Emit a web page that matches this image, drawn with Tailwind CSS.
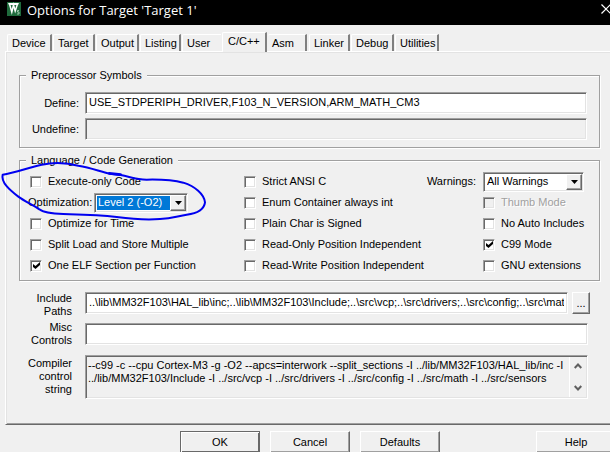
<!DOCTYPE html>
<html lang="en">
<head>
<meta charset="utf-8">
<title>Options for Target 'Target 1'</title>
<script src="https://cdn.jsdelivr.net/npm/@tailwindcss/browser@4"></script>
</head>
<body class="h-screen overflow-hidden bg-[#f0f0f0] font-['Liberation_Sans',Arial,sans-serif] text-[11px] leading-[13px] text-black">
<div class="relative flex h-full flex-col">

  <header class="flex h-[25px] shrink-0 items-center bg-black pl-[7px] text-white">
    <svg class="-mt-[7px] h-[14px] w-[14px]" viewBox="0 0 14 14" aria-hidden="true">
      <rect width="14" height="14" fill="#1f6a3c"/>
      <path d="M1 1h11L11 3H2z" fill="#fff"/>
      <path d="M2.500 2L4.800 10L6.500 3L8.200 9L10.500 2" fill="none" stroke="#fff" stroke-width="1.500"/>
      <path d="M12 8.500h-1.500v1.500h1.500v2h-2" fill="none" stroke="#b9dcc5" stroke-width=".8"/>
    </svg>
    <h1 class="-mt-[5px] ml-[6px] font-['Open_Sans','Noto_Sans',sans-serif] text-[13px] leading-[18px] whitespace-nowrap">Options for Target 'Target 1'</h1>
    <button aria-label="Close" class="-mt-[7px] -mr-[4px] ml-auto h-[18px] w-[16px]">
      <svg class="mx-auto h-[10px] w-[10px]" viewBox="0 0 10 10"><path d="M.5.5l9 9M9.500.5l-9 9" stroke="#fff" stroke-width="1.200"/></svg>
    </button>
  </header>

  <nav role="tablist" class="flex h-[26px] shrink-0 items-end gap-px pl-[7px]">
    <button role="tab" class="h-[17px] w-[45px] rounded-tl-[2px] border-t border-r-2 border-l border-t-white border-r-[#808080] border-l-white pt-px pl-1 text-left">Device</button>
    <button role="tab" class="h-[17px] w-[42px] rounded-tl-[2px] border-t border-r-2 border-l border-t-white border-r-[#808080] border-l-white pt-px pl-1 text-left">Target</button>
    <button role="tab" class="h-[17px] w-[43px] rounded-tl-[2px] border-t border-r-2 border-l border-t-white border-r-[#808080] border-l-white pt-px pl-1 text-left">Output</button>
    <button role="tab" class="h-[17px] w-[41px] rounded-tl-[2px] border-t border-r-2 border-l border-t-white border-r-[#808080] border-l-white pt-px pl-1 text-left">Listing</button>
    <button role="tab" class="h-[17px] w-[39px] rounded-tl-[2px] border-t border-l border-white pt-px pl-1 text-left">User</button>
    <button role="tab" aria-selected="true" class="z-10 -mb-px h-[20px] w-[45px] rounded-tl-[2px] border-t border-r-2 border-l border-t-white border-r-[#808080] border-l-white bg-[#f0f0f0] pb-[3px] pl-[5px] text-left">C/C++</button>
    <button role="tab" class="h-[17px] w-[39px] rounded-tl-[2px] border-t border-r-2 border-t-white border-r-[#808080] pt-px pl-1 text-left">Asm</button>
    <button role="tab" class="ml-px h-[17px] w-[41px] rounded-tl-[2px] border-t border-r-2 border-l border-t-white border-r-[#808080] border-l-white pt-px pl-1 text-left">Linker</button>
    <button role="tab" class="h-[17px] w-[43px] rounded-tl-[2px] border-t border-r-2 border-l border-t-white border-r-[#808080] border-l-white pt-px pl-1 text-left">Debug</button>
    <button role="tab" class="h-[17px] w-[44px] rounded-tl-[2px] border-t border-r-2 border-l border-t-white border-r-[#808080] border-l-white pt-px pl-1 text-left">Utilities</button>
  </nav>

  <main class="ml-[5px] shrink-0 border-t border-b border-l border-t-white border-b-[#696969] border-l-white pt-[15px] pr-[10px] pb-[25px] pl-[13px] shadow-[inset_1px_1px_0_#e3e3e3,inset_0_-1px_0_#a0a0a0]">

    <fieldset class="border border-[#a0a0a0] pt-[9px] pr-[12px] pb-[7px] shadow-[1px_1px_0_#fff,inset_1px_1px_0_#fff]">
      <legend class="relative ml-[6px] h-4 bg-[#f0f0f0] px-[5px] leading-4">Preprocessor Symbols</legend>
      <div class="grid grid-cols-[59px_1fr] items-center gap-x-[6px] gap-y-1">
        <label for="define" class="text-right">Define:</label>
        <input id="define" value="USE_STDPERIPH_DRIVER,F103_N_VERSION,ARM_MATH_CM3" class="h-[22px] w-full border border-t-[#a0a0a0] border-r-white border-b-white border-l-[#a0a0a0] bg-white px-[3px] pb-[2px] shadow-[inset_1px_1px_0_#696969,inset_-1px_-1px_0_#e3e3e3] outline-none">
        <label for="undefine" class="text-right">Undefine:</label>
        <input id="undefine" readonly class="h-[22px] w-full border border-t-[#a0a0a0] border-r-white border-b-white border-l-[#a0a0a0] bg-[#f0f0f0] px-[3px] shadow-[inset_1px_1px_0_#696969,inset_-1px_-1px_0_#e3e3e3] outline-none">
      </div>
    </fieldset>

    <fieldset class="mt-1 border border-[#a0a0a0] pt-[3px] pb-1 pl-[10px] shadow-[1px_1px_0_#fff,inset_1px_1px_0_#fff]">
      <legend class="relative ml-[-4px] h-4 bg-[#f0f0f0] px-[5px] leading-4">Language / Code Generation</legend>
      <div class="grid grid-cols-[214fr_239fr_116fr]">
        <div class="grid auto-rows-[21px] items-center">
          <label class="flex items-center gap-[6px]"><span class="grid"><input type="checkbox" class="col-start-1 row-start-1 h-3 w-3 appearance-none border border-t-[#a0a0a0] border-r-white border-b-white border-l-[#a0a0a0] bg-white shadow-[inset_1px_1px_0_#696969,inset_-1px_-1px_0_#e3e3e3]"></span>Execute-only Code</label>
          <div class="-ml-[2px] flex items-center gap-[6px]">
            <label for="opt" class="w-[60px]">Optimization:</label>
            <span class="grid w-[94px] items-center">
              <select id="opt" class="col-start-1 row-start-1 h-[20px] w-full appearance-none border border-t-[#a0a0a0] border-r-white border-b-white border-l-[#a0a0a0] bg-[#0078d7] pl-[3px] text-white shadow-[inset_1px_1px_0_#696969,inset_-1px_-1px_0_#e3e3e3,inset_0_0_0_2px_#fff] outline-none"><option>Level 2 (-O2)</option></select>
              <span class="pointer-events-none col-start-1 row-start-1 mr-[2px] grid h-4 w-4 place-items-center justify-self-end border border-t-white border-r-[#696969] border-b-[#696969] border-l-white bg-[#f0f0f0] shadow-[inset_-1px_-1px_0_#a0a0a0]"><svg class="h-1 w-[7px]" viewBox="0 0 7 4"><path d="M0 0h7L3.500 4z"/></svg></span>
            </span>
          </div>
          <label class="flex items-center gap-[6px]"><span class="grid"><input type="checkbox" class="col-start-1 row-start-1 h-3 w-3 appearance-none border border-t-[#a0a0a0] border-r-white border-b-white border-l-[#a0a0a0] bg-white shadow-[inset_1px_1px_0_#696969,inset_-1px_-1px_0_#e3e3e3]"></span>Optimize for Time</label>
          <label class="flex items-center gap-[6px]"><span class="grid"><input type="checkbox" class="col-start-1 row-start-1 h-3 w-3 appearance-none border border-t-[#a0a0a0] border-r-white border-b-white border-l-[#a0a0a0] bg-white shadow-[inset_1px_1px_0_#696969,inset_-1px_-1px_0_#e3e3e3]"></span>Split Load and Store Multiple</label>
          <label class="flex items-center gap-[6px]"><span class="grid place-items-center"><input type="checkbox" checked class="peer col-start-1 row-start-1 h-3 w-3 appearance-none border border-t-[#a0a0a0] border-r-white border-b-white border-l-[#a0a0a0] bg-white shadow-[inset_1px_1px_0_#696969,inset_-1px_-1px_0_#e3e3e3]"><svg class="pointer-events-none invisible col-start-1 row-start-1 h-[7px] w-[7px] peer-checked:visible" viewBox="0 0 7 7"><path d="M0 2v3l2.500 2L7 3V0L2.500 4z"/></svg></span>One ELF Section per Function</label>
        </div>

        <div class="grid auto-rows-[21px] items-center">
          <div class="flex items-center justify-between pr-[7px]">
            <label class="flex items-center gap-[6px]"><span class="grid"><input type="checkbox" class="col-start-1 row-start-1 h-3 w-3 appearance-none border border-t-[#a0a0a0] border-r-white border-b-white border-l-[#a0a0a0] bg-white shadow-[inset_1px_1px_0_#696969,inset_-1px_-1px_0_#e3e3e3]"></span>Strict ANSI C</label>
            <label for="warn">Warnings:</label>
          </div>
          <label class="flex items-center gap-[6px]"><span class="grid"><input type="checkbox" class="col-start-1 row-start-1 h-3 w-3 appearance-none border border-t-[#a0a0a0] border-r-white border-b-white border-l-[#a0a0a0] bg-white shadow-[inset_1px_1px_0_#696969,inset_-1px_-1px_0_#e3e3e3]"></span>Enum Container always int</label>
          <label class="flex items-center gap-[6px]"><span class="grid"><input type="checkbox" class="col-start-1 row-start-1 h-3 w-3 appearance-none border border-t-[#a0a0a0] border-r-white border-b-white border-l-[#a0a0a0] bg-white shadow-[inset_1px_1px_0_#696969,inset_-1px_-1px_0_#e3e3e3]"></span>Plain Char is Signed</label>
          <label class="flex items-center gap-[6px]"><span class="grid"><input type="checkbox" class="col-start-1 row-start-1 h-3 w-3 appearance-none border border-t-[#a0a0a0] border-r-white border-b-white border-l-[#a0a0a0] bg-white shadow-[inset_1px_1px_0_#696969,inset_-1px_-1px_0_#e3e3e3]"></span>Read-Only Position Independent</label>
          <label class="flex items-center gap-[6px]"><span class="grid"><input type="checkbox" class="col-start-1 row-start-1 h-3 w-3 appearance-none border border-t-[#a0a0a0] border-r-white border-b-white border-l-[#a0a0a0] bg-white shadow-[inset_1px_1px_0_#696969,inset_-1px_-1px_0_#e3e3e3]"></span>Read-Write Position Independent</label>
        </div>

        <div class="grid auto-rows-[21px] items-center">
          <span class="grid w-[101px] items-center">
            <select id="warn" class="col-start-1 row-start-1 h-[20px] w-full appearance-none border border-t-[#a0a0a0] border-r-white border-b-white border-l-[#a0a0a0] bg-white pl-[3px] shadow-[inset_1px_1px_0_#696969,inset_-1px_-1px_0_#e3e3e3] outline-none"><option>All Warnings</option></select>
            <span class="pointer-events-none col-start-1 row-start-1 mr-[2px] grid h-4 w-4 place-items-center justify-self-end border border-t-white border-r-[#696969] border-b-[#696969] border-l-white bg-[#f0f0f0] shadow-[inset_-1px_-1px_0_#a0a0a0]"><svg class="h-1 w-[7px]" viewBox="0 0 7 4"><path d="M0 0h7L3.500 4z"/></svg></span>
          </span>
          <label class="flex items-center gap-[6px] text-[#a0a0a0] text-shadow-[1px_1px_0_#fff]"><span class="grid"><input type="checkbox" disabled class="col-start-1 row-start-1 h-3 w-3 appearance-none border border-t-[#a0a0a0] border-r-white border-b-white border-l-[#a0a0a0] bg-[#f0f0f0] shadow-[inset_1px_1px_0_#696969,inset_-1px_-1px_0_#e3e3e3]"></span>Thumb Mode</label>
          <label class="flex items-center gap-[6px]"><span class="grid"><input type="checkbox" class="col-start-1 row-start-1 h-3 w-3 appearance-none border border-t-[#a0a0a0] border-r-white border-b-white border-l-[#a0a0a0] bg-white shadow-[inset_1px_1px_0_#696969,inset_-1px_-1px_0_#e3e3e3]"></span>No Auto Includes</label>
          <label class="flex items-center gap-[6px]"><span class="grid place-items-center"><input type="checkbox" checked class="peer col-start-1 row-start-1 h-3 w-3 appearance-none border border-t-[#a0a0a0] border-r-white border-b-white border-l-[#a0a0a0] bg-white shadow-[inset_1px_1px_0_#696969,inset_-1px_-1px_0_#e3e3e3]"><svg class="pointer-events-none invisible col-start-1 row-start-1 h-[7px] w-[7px] peer-checked:visible" viewBox="0 0 7 7"><path d="M0 2v3l2.500 2L7 3V0L2.500 4z"/></svg></span>C99 Mode</label>
          <label class="flex items-center gap-[6px]"><span class="grid"><input type="checkbox" class="col-start-1 row-start-1 h-3 w-3 appearance-none border border-t-[#a0a0a0] border-r-white border-b-white border-l-[#a0a0a0] bg-white shadow-[inset_1px_1px_0_#696969,inset_-1px_-1px_0_#e3e3e3]"></span>GNU extensions</label>
        </div>
      </div>
    </fieldset>

    <div class="mt-[11px] grid grid-cols-[53px_1fr] gap-x-[13px] gap-y-[3px] pr-[12px]">
      <label for="inc" class="text-right">Include<br>Paths</label>
      <div class="-mr-[2px] flex items-start gap-1">
        <input id="inc" value="..\lib\MM32F103\HAL_lib\inc;..\lib\MM32F103\Include;..\src\vcp;..\src\drivers;..\src\config;..\src\math;..\src\sensors" class="h-[22px] min-w-0 flex-1 border border-t-[#a0a0a0] border-r-white border-b-white border-l-[#a0a0a0] bg-white px-[3px] pb-[2px] shadow-[inset_1px_1px_0_#696969,inset_-1px_-1px_0_#e3e3e3] outline-none">
        <button aria-label="Browse include paths" class="h-[22px] w-[18px] border border-t-white border-r-[#696969] border-b-[#696969] border-l-white shadow-[inset_-1px_-1px_0_#a0a0a0]">...</button>
      </div>
      <label for="misc" class="text-right">Misc<br>Controls</label>
      <input id="misc" class="mt-[2px] h-[22px] w-full border border-t-[#a0a0a0] border-r-white border-b-white border-l-[#a0a0a0] bg-white px-[3px] shadow-[inset_1px_1px_0_#696969,inset_-1px_-1px_0_#e3e3e3] outline-none">
      <label for="ccs" class="pt-[7px] text-right">Compiler<br>control<br>string</label>
      <div class="mt-[5px] flex h-[44px] border border-t-[#a0a0a0] border-r-white border-b-white border-l-[#a0a0a0] p-px shadow-[inset_1px_1px_0_#696969,inset_-1px_-1px_0_#e3e3e3]">
        <textarea id="ccs" readonly class="min-w-0 flex-1 resize-none overflow-hidden pt-[2px] pl-px whitespace-pre outline-none">--c99 -c --cpu Cortex-M3 -g -O2 --apcs=interwork --split_sections -I ../lib/MM32F103/HAL_lib/inc -I
../lib/MM32F103/Include -I ../src/vcp -I ../src/drivers -I ../src/config -I ../src/math -I ../src/sensors</textarea>
        <div class="flex w-[17px] flex-col items-center justify-between border-l border-white py-[6px]">
          <svg class="h-[6px] w-2" viewBox="0 0 8 6"><path d="M.7 5L4 1.500L7.300 5" fill="none" stroke="#606060" stroke-width="2"/></svg>
          <svg class="h-[6px] w-2" viewBox="0 0 8 6"><path d="M.7 1L4 4.500L7.300 1" fill="none" stroke="#606060" stroke-width="2"/></svg>
        </div>
      </div>
    </div>
  </main>

  <footer class="mt-[6px] -mr-[6px] flex shrink-0 gap-[10px] pl-[180px]">
    <button class="h-[22px] w-[80px] border border-[#696969] shadow-[inset_1px_1px_0_#fff,inset_-1px_-1px_0_#696969]">OK</button>
    <button class="h-[22px] w-[80px] border border-t-white border-r-[#696969] border-b-[#696969] border-l-white shadow-[inset_-1px_-1px_0_#a0a0a0]">Cancel</button>
    <button class="h-[22px] w-[80px] border border-t-white border-r-[#696969] border-b-[#696969] border-l-white shadow-[inset_-1px_-1px_0_#a0a0a0]">Defaults</button>
    <button class="ml-auto h-[22px] w-[80px] border border-t-white border-r-[#696969] border-b-[#696969] border-l-white shadow-[inset_-1px_-1px_0_#a0a0a0]">Help</button>
  </footer>

  <!-- Freehand ring around the optimization setting -->
  <svg class="pointer-events-none absolute top-[160px] left-0 h-[66px] w-[210px]" viewBox="0 45 630 198" fill="none" stroke="#0000f0" stroke-linecap="round" stroke-linejoin="round" aria-hidden="true">
    <path stroke-width="6" d="M8 89C45 83 85 68 125 59C150 54 195 52 235 62C275 68 300 80 330 86L362 90C395 97 410 104 440 104C485 103 515 104 550 113C585 124 612 147 615 172C613 190 600 204 560 209C530 214 515 222 480 222C430 226 395 222 350 216C290 208 230 208 190 207C155 206 130 203 118 193C95 178 72 168 55 155C30 135 2 112 8 89Z"/>
    <path stroke-width="8" d="M328 85L362 89"/>
  </svg>
</div>
</body>
</html>
